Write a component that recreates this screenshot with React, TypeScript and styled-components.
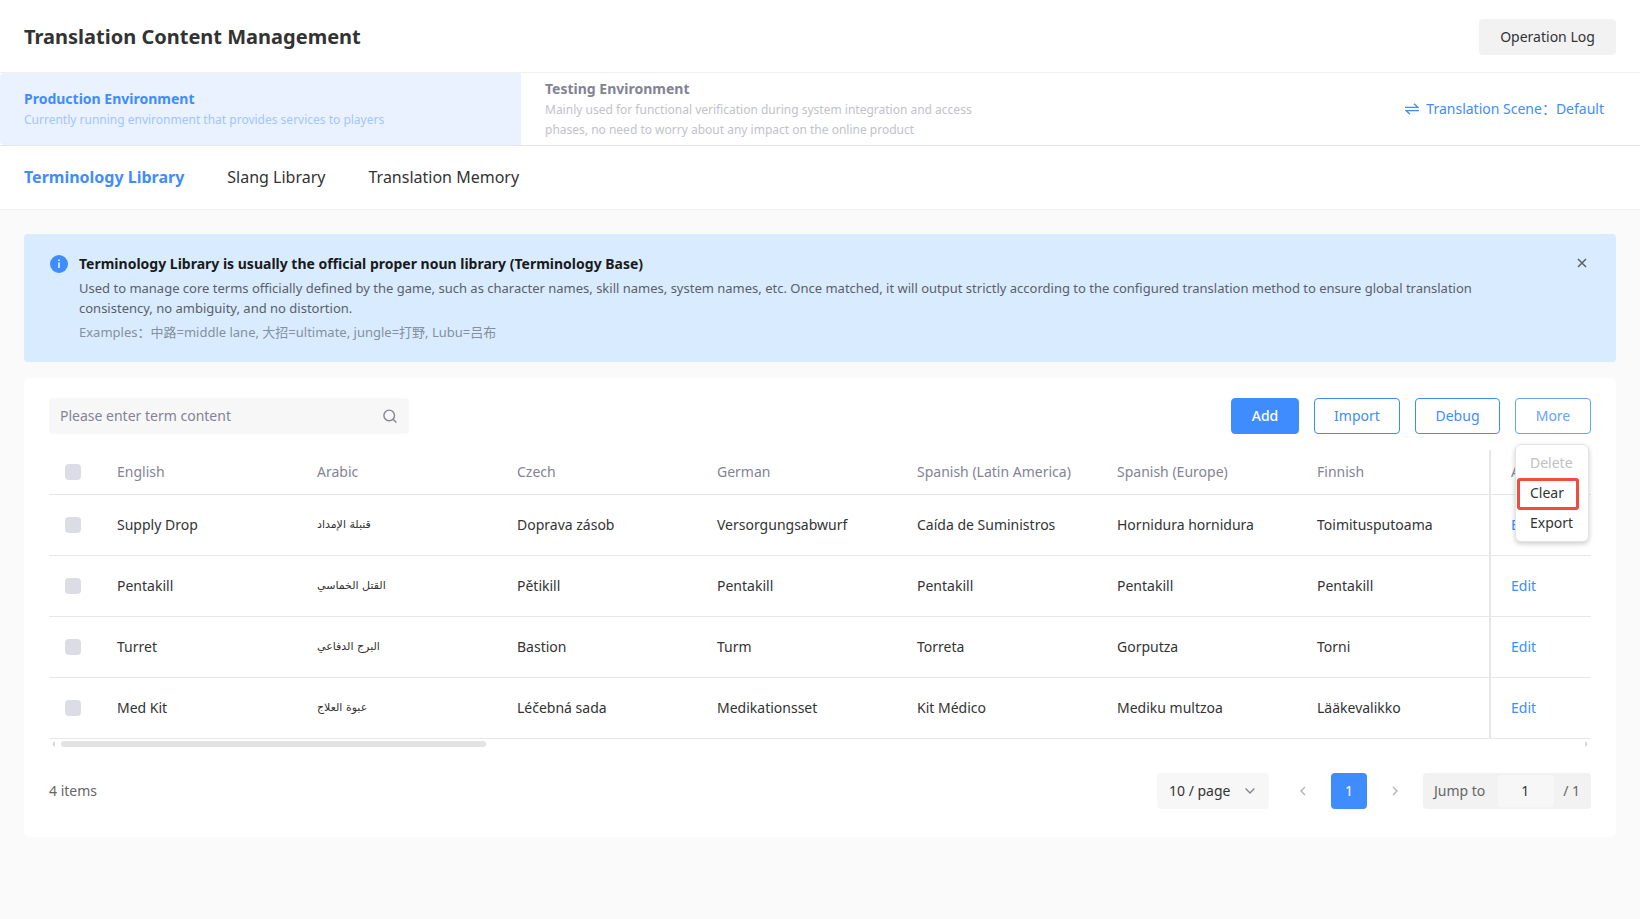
import React from 'react';
import styled, { createGlobalStyle, css } from 'styled-components';

const color = {
  primary: '#3f8cff',
  text: '#333333',
  muted: '#838394',
  faint: '#c2c2c9',
  line: '#e7e7e7',
  page: '#fafafa',
  field: '#f7f7f7',
  fill: '#f2f2f2',
};

const GlobalStyle = createGlobalStyle`
  *, *::before, *::after { box-sizing: border-box; }
  body {
    margin: 0;
    background: ${color.page};
    color: ${color.text};
    font-family: 'Noto Sans', 'Noto Sans CJK SC', sans-serif;
    font-size: 14px;
    line-height: 20px;
  }
  button, input, select { font: inherit; color: inherit; margin: 0; }
  h1, h2, p { margin: 0; }
`;

const Page = styled.div`
  min-height: 100vh;
`;

const Header = styled.header`
  display: flex;
  align-items: center;
  justify-content: space-between;
  height: 73px;
  padding: 2px 24px 0;
  background: #fff;
  border-bottom: 1px solid #f0f0f0;
`;

const Title = styled.h1`
  font-size: 20px;
  line-height: 28px;
  font-weight: 700;
`;

const LogButton = styled.button`
  height: 36px;
  width: 137px;
  border: 0;
  border-radius: 4px;
  background: ${color.fill};
`;

const EnvBar = styled.div`
  display: grid;
  grid-template-columns: 521px 521px 1fr;
  height: 73px;
  background: #fff;
  border-bottom: 1px solid ${color.line};
`;

const EnvTab = styled.button<{ $active?: boolean }>`
  display: flex;
  flex-direction: column;
  justify-content: center;
  padding: 0 24px;
  border: 0;
  border-radius: 4px 0 0 4px;
  text-align: left;
  background: ${(p) => (p.$active ? '#eaf2ff' : 'transparent')};
  color: ${(p) => (p.$active ? color.primary : color.muted)};
`;

const EnvName = styled.span`
  font-weight: 700;
  line-height: 22px;
`;

const EnvNote = styled.span<{ $active?: boolean }>`
  max-width: 440px;
  font-size: 12px;
  line-height: 20px;
  color: ${(p) => (p.$active ? '#a0c6ff' : color.faint)};
`;

const SceneLink = styled.a`
  display: flex;
  align-items: center;
  justify-content: flex-end;
  gap: 7px;
  padding-right: 36px;
  color: ${color.primary};
  text-decoration: none;
`;

const Tabs = styled.nav`
  display: flex;
  align-items: center;
  gap: 43px;
  height: 64px;
  padding: 0 24px 2px;
  background: #fff;
  border-bottom: 1px solid #f0f0f0;
`;

const Tab = styled.a<{ $active?: boolean }>`
  font-size: 16px;
  line-height: 24px;
  font-weight: ${(p) => (p.$active ? 700 : 400)};
  color: ${(p) => (p.$active ? color.primary : color.text)};
  text-decoration: none;
`;

const Content = styled.main`
  display: flex;
  flex-direction: column;
  gap: 16px;
  padding: 24px;
`;

const Banner = styled.section`
  display: flex;
  align-items: flex-start;
  padding: 20px 26px;
  border-radius: 4px;
  background: #d9ecff;
`;

const InfoIcon = styled.svg`
  flex: none;
  margin: 1px 11px 0 0;
`;

const BannerBody = styled.div`
  flex: 1;
  padding-right: 68px;
`;

const BannerTitle = styled.h2`
  font-size: 14px;
  line-height: 20px;
  font-weight: 700;
  color: #1a1a1a;
`;

const BannerText = styled.p`
  margin-top: 4px;
  font-size: 13px;
  line-height: 20px;
  color: #5a6068;
`;

const BannerExample = styled(BannerText)`
  color: #84909e;
`;

const CloseButton = styled.button`
  display: flex;
  flex: none;
  padding: 2px;
  border: 0;
  background: none;
`;

const Card = styled.section`
  padding: 20px 25px 28px;
  border-radius: 6px;
  background: #fff;
`;

const Toolbar = styled.div`
  display: flex;
  justify-content: space-between;
  margin-bottom: 16px;
`;

const SearchBox = styled.label`
  display: flex;
  align-items: center;
  width: 360px;
  height: 36px;
  padding: 0 11px;
  border-radius: 4px;
  background: ${color.field};
`;

const SearchInput = styled.input`
  flex: 1;
  min-width: 0;
  padding: 0;
  border: 0;
  outline: 0;
  background: none;
  &::placeholder { color: ${color.muted}; opacity: 1; }
`;

const Actions = styled.div`
  display: flex;
  gap: 15px;
`;

const ActionButton = styled.button<{ $kind?: 'solid' | 'soft'; $width: number }>`
  width: ${(p) => p.$width}px;
  height: 36px;
  padding: 0;
  border: 1px solid ${color.primary};
  border-radius: 4px;
  background: #fff;
  color: ${color.primary};
  ${(p) => p.$kind === 'solid' && css`
    background: ${color.primary};
    color: #fff;
    font-weight: 500;
  `}
  ${(p) => p.$kind === 'soft' && css`
    border-color: #65a3ff;
    color: #65a3ff;
  `}
`;

const MenuAnchor = styled.div`
  position: relative;
`;

const Menu = styled.div`
  position: absolute;
  z-index: 2;
  top: 46px;
  right: 2px;
  width: 74px;
  padding: 3px 0;
  border: 1px solid #e4e4e8;
  border-radius: 6px;
  background: #fff;
  box-shadow: 0 2px 5px rgba(0, 0, 0, 0.2);
`;

const MenuItem = styled.button`
  display: block;
  width: 100%;
  height: 30px;
  padding: 0 0 0 14px;
  border: 0;
  background: none;
  text-align: left;
  &:disabled { color: #c0c0c0; }
`;

const Highlight = styled.span`
  position: absolute;
  top: 33px;
  left: 1px;
  width: 62px;
  height: 32px;
  border: 3px solid #f44b3f;
  border-radius: 3px;
  pointer-events: none;
`;

const Table = styled.table`
  width: 100%;
  table-layout: fixed;
  border-collapse: separate;
  border-spacing: 0;
`;

const Head = styled.th<{ $width?: number; $check?: boolean; $pinned?: boolean }>`
  width: ${(p) => (p.$width ? `${p.$width}px` : 'auto')};
  height: 45px;
  padding: 0 0 0 ${(p) => (p.$check ? 16 : 20)}px;
  border-bottom: 1px solid ${color.line};
  border-left: ${(p) => (p.$pinned ? `2px solid ${color.line}` : '0')};
  font-weight: 400;
  text-align: left;
  white-space: nowrap;
  color: ${color.muted};
`;

const Cell = styled.td<{ $check?: boolean; $pinned?: boolean }>`
  height: 61px;
  padding: 0 0 0 ${(p) => (p.$check ? 16 : 20)}px;
  border-bottom: 1px solid ${color.line};
  border-left: ${(p) => (p.$pinned ? `2px solid ${color.line}` : '0')};
  white-space: nowrap;
`;

const Arabic = styled.span`
  display: block;
  font-family: 'DejaVu Sans', sans-serif;
  font-size: 11px;
`;

const Check = styled.input`
  appearance: none;
  display: block;
  width: 16px;
  height: 16px;
  margin: 0;
  border-radius: 4px;
  background: #dcdce6;
  &:checked { background: ${color.primary}; }
`;

const EditLink = styled.a`
  color: ${color.primary};
  text-decoration: none;
`;

const ScrollBar = styled.div`
  display: flex;
  align-items: center;
  gap: 6px;
  height: 10px;
  padding: 0 3px;
`;

const ScrollTrack = styled.div`
  flex: 1;
`;

const ScrollThumb = styled.div`
  width: 28%;
  height: 6px;
  border-radius: 3px;
  background: #e3e3e3;
`;

const Footer = styled.div`
  display: flex;
  align-items: center;
  margin-top: 24px;
`;

const Total = styled.span`
  flex: 1;
  color: #666;
`;

const SizePicker = styled.label`
  position: relative;
  display: flex;
  align-items: center;
  width: 112px;
  margin-right: 16px;
`;

const SizeSelect = styled.select`
  appearance: none;
  width: 100%;
  height: 36px;
  padding: 0 12px;
  border: 0;
  border-radius: 4px;
  background: ${color.field};
`;

const SizeArrow = styled.svg`
  position: absolute;
  right: 14px;
  pointer-events: none;
`;

const PageButton = styled.button<{ $current?: boolean }>`
  display: flex;
  align-items: center;
  justify-content: center;
  width: 36px;
  height: 36px;
  margin-right: 10px;
  padding: 0;
  border: 0;
  border-radius: 4px;
  background: ${(p) => (p.$current ? color.primary : 'none')};
  color: ${(p) => (p.$current ? '#fff' : '#b4b4b8')};
`;

const Jump = styled.label`
  display: flex;
  align-items: center;
  width: 168px;
  height: 36px;
  padding: 0 11px;
  border-radius: 4px;
  background: ${color.fill};
  color: #666;
`;

const JumpInput = styled.input`
  width: 56px;
  height: 32px;
  margin: 0 9px 0 auto;
  padding: 0 2px 2px 0;
  border: 0;
  border-radius: 4px;
  background: ${color.field};
  color: ${color.text};
  text-align: center;
`;

const languages = ['English', 'Arabic', 'Czech', 'German', 'Spanish (Latin America)', 'Spanish (Europe)', 'Finnish'];

const terms = [
  ['Supply Drop', 'قنبلة الإمداد', 'Doprava zásob', 'Versorgungsabwurf', 'Caída de Suministros', 'Hornidura hornidura', 'Toimitusputoama'],
  ['Pentakill', 'القتل الخماسي', 'Pětikill', 'Pentakill', 'Pentakill', 'Pentakill', 'Pentakill'],
  ['Turret', 'البرج الدفاعي', 'Bastion', 'Turm', 'Torreta', 'Gorputza', 'Torni'],
  ['Med Kit', 'عبوة العلاج', 'Léčebná sada', 'Medikationsset', 'Kit Médico', 'Mediku multzoa', 'Lääkevalikko'],
];

const Chevron = ({ d }: { d: string }) => (
  <svg width="12" height="12" viewBox="0 0 12 12" fill="none" stroke="currentColor" strokeWidth="1.4">
    <path d={d} />
  </svg>
);

export default function App() {
  return (
    <>
      <GlobalStyle />
      <Page>
        <Header>
          <Title>Translation Content Management</Title>
          <LogButton type="button">Operation Log</LogButton>
        </Header>

        <EnvBar>
          <EnvTab type="button" $active>
            <EnvName>Production Environment</EnvName>
            <EnvNote $active>Currently running environment that provides services to players</EnvNote>
          </EnvTab>
          <EnvTab type="button">
            <EnvName>Testing Environment</EnvName>
            <EnvNote>
              Mainly used for functional verification during system integration and access phases, no need to worry
              about any impact on the online product
            </EnvNote>
          </EnvTab>
          <SceneLink href="#scene">
            <svg width="14" height="12" viewBox="0 0 14 12" fill="none" stroke="currentColor" strokeWidth="1.3">
              <path d="M0 4.4h13L9 .8M14 7.6H1l4 3.6" />
            </svg>
            <span>Translation Scene：Default</span>
          </SceneLink>
        </EnvBar>

        <Tabs>
          <Tab href="#terminology" $active>Terminology Library</Tab>
          <Tab href="#slang">Slang Library</Tab>
          <Tab href="#memory">Translation Memory</Tab>
        </Tabs>

        <Content>
          <Banner>
            <InfoIcon width="18" height="18" viewBox="0 0 18 18">
              <circle cx="9" cy="9" r="9" fill={color.primary} />
              <path d="M9 7.5v5.5M9 4.6v1.5" stroke="#fff" strokeWidth="1.4" />
            </InfoIcon>
            <BannerBody>
              <BannerTitle>Terminology Library is usually the official proper noun library (Terminology Base)</BannerTitle>
              <BannerText>
                Used to manage core terms officially defined by the game, such as character names, skill names, system
                names, etc. Once matched, it will output strictly according to the configured translation method to
                ensure global translation consistency, no ambiguity, and no distortion.
              </BannerText>
              <BannerExample>Examples：中路=middle lane, 大招=ultimate, jungle=打野, Lubu=吕布</BannerExample>
            </BannerBody>
            <CloseButton type="button" aria-label="Close">
              <svg width="12" height="14" viewBox="0 0 12 14" stroke="#5a6068" strokeWidth="1.5">
                <path d="M2 3l8 8M10 3l-8 8" />
              </svg>
            </CloseButton>
          </Banner>

          <Card>
            <Toolbar>
              <SearchBox>
                <SearchInput type="text" placeholder="Please enter term content" aria-label="Term content" />
                <svg width="16" height="16" viewBox="0 0 16 16" fill="none" stroke={color.muted} strokeWidth="1.4">
                  <circle cx="7.2" cy="7.4" r="5.3" />
                  <path d="M11 11.2l3.4 3.4" />
                </svg>
              </SearchBox>
              <Actions>
                <ActionButton type="button" $kind="solid" $width={68}>Add</ActionButton>
                <ActionButton type="button" $width={86}>Import</ActionButton>
                <ActionButton type="button" $width={85}>Debug</ActionButton>
                <MenuAnchor>
                  <ActionButton type="button" $kind="soft" $width={76} aria-expanded="true">More</ActionButton>
                  <Menu>
                    <MenuItem type="button" disabled>Delete</MenuItem>
                    <MenuItem type="button">Clear</MenuItem>
                    <MenuItem type="button">Export</MenuItem>
                    <Highlight />
                  </Menu>
                </MenuAnchor>
              </Actions>
            </Toolbar>

            <Table>
              <thead>
                <tr>
                  <Head $width={48} $check><Check type="checkbox" aria-label="Select all terms" /></Head>
                  {languages.map((name, i) => (
                    <Head key={name} $width={i < languages.length - 1 ? 200 : undefined}>{name}</Head>
                  ))}
                  <Head $width={102} $pinned>Action</Head>
                </tr>
              </thead>
              <tbody>
                {terms.map((row) => (
                  <tr key={row[0]}>
                    <Cell $check><Check type="checkbox" aria-label={`Select ${row[0]}`} /></Cell>
                    {row.map((value, i) => (
                      <Cell key={languages[i]}>{i === 1 ? <Arabic lang="ar">{value}</Arabic> : value}</Cell>
                    ))}
                    <Cell $pinned><EditLink href="#edit">Edit</EditLink></Cell>
                  </tr>
                ))}
              </tbody>
            </Table>
            <ScrollBar>
              <svg width="3" height="6" viewBox="0 0 3 6"><path d="M3 0v6L0 3z" fill="#d8d8d8" /></svg>
              <ScrollTrack><ScrollThumb /></ScrollTrack>
              <svg width="3" height="6" viewBox="0 0 3 6"><path d="M0 0v6l3-3z" fill="#d8d8d8" /></svg>
            </ScrollBar>

            <Footer>
              <Total>4 items</Total>
              <SizePicker>
                <SizeSelect aria-label="Items per page" defaultValue="10">
                  <option value="10">10 / page</option>
                  <option value="20">20 / page</option>
                </SizeSelect>
                <SizeArrow width="10" height="6" viewBox="0 0 10 6" fill="none" stroke={color.muted} strokeWidth="1.4">
                  <path d="M.6.6L5 5 9.4.6" />
                </SizeArrow>
              </SizePicker>
              <PageButton type="button" aria-label="Previous page"><Chevron d="M8 2L4 6l4 4" /></PageButton>
              <PageButton type="button" $current>1</PageButton>
              <PageButton type="button" aria-label="Next page"><Chevron d="M4 2l4 4-4 4" /></PageButton>
              <Jump>
                Jump to
                <JumpInput type="text" defaultValue="1" />
                / 1
              </Jump>
            </Footer>
          </Card>
        </Content>
      </Page>
    </>
  );
}
